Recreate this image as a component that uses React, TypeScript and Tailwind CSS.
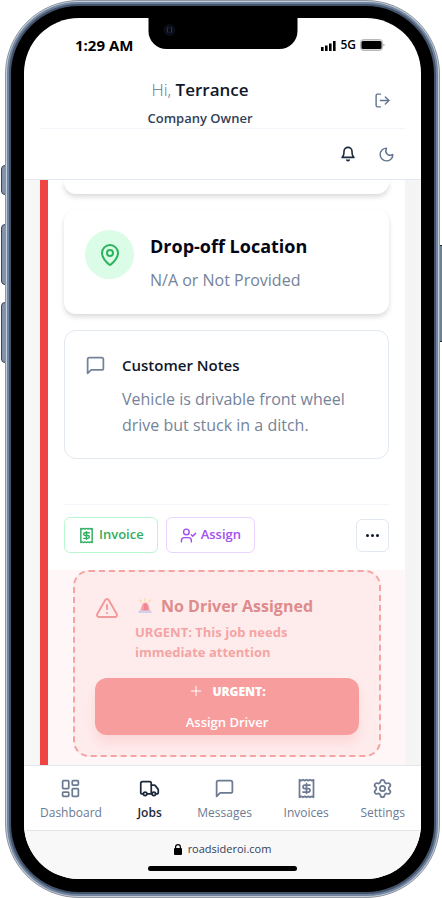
import type { ReactNode } from "react";
import {
  LayoutDashboard,
  LogOut,
  MapPin,
  Moon,
  Plus,
  Receipt,
  Settings,
  TriangleAlert,
  Truck,
  UserCheck,
} from "lucide-react";

function BellIcon() {
  return (
    <svg className="size-4" viewBox="0 0 24 24" fill="none" stroke="currentColor" strokeWidth="2.4" strokeLinecap="round" strokeLinejoin="round" aria-hidden="true">
      <path d="M6 8a6 6 0 0 1 12 0c0 7 3 9 3 9H3s3-2 3-9" />
      <path d="M10.3 21a1.94 1.94 0 0 0 3.4 0" />
    </svg>
  );
}

function MessageIcon() {
  return (
    <svg className="size-[21px] shrink-0" viewBox="0 0 24 24" fill="none" stroke="currentColor" strokeWidth="2" strokeLinecap="round" strokeLinejoin="round" aria-hidden="true">
      <path d="M21 15a2 2 0 0 1-2 2H7l-4 4V5a2 2 0 0 1 2-2h14a2 2 0 0 1 2 2z" />
    </svg>
  );
}

function SirenIcon() {
  return (
    <svg className="size-4 shrink-0" viewBox="0 0 32 32" aria-hidden="true">
      <g stroke="#fbd9a0" strokeWidth="2.4" strokeLinecap="round">
        <path d="M16 1v5M5 4l4 4M27 4l-4 4" />
      </g>
      <path d="M6 27 10 14c2-7 11-7 13 0l3 13z" fill="#f7a0a6" />
      <path d="M13 25 14 14c.4-3 4-4 6-2l2 13z" fill="#f08491" />
      <path d="M4 25h24l2 5H2z" fill="#d6cfec" />
    </svg>
  );
}

function StatusBar() {
  return (
    <div className="flex h-[54px] shrink-0 items-center justify-between pr-9 pl-[51px]">
      <span className="text-[15px] font-bold text-black">1:29 AM</span>
      <div className="flex items-center gap-1 text-black">
        <svg className="h-[11px] w-[15px]" viewBox="0 0 15 11" aria-hidden="true">
          <path d="M0 7h2.6v4H0zM4 5.500h2.600V11H4zM8 3.500h2.600V11H8zM12 1h2.600v10H12z" />
        </svg>
        <span className="text-xs font-semibold">5G</span>
        <svg className="h-3 w-[25px]" viewBox="0 0 25 12" aria-hidden="true">
          <rect x="0.500" y="0.500" width="22" height="11" rx="3" fill="#d8d8d8" stroke="#b8b8b8" />
          <rect x="1.500" y="2" width="20" height="8" rx="1.500" />
          <path d="M23.500 4.500q2 1.500 0 3z" fill="#888" />
        </svg>
      </div>
    </div>
  );
}

function Header() {
  return (
    <header className="shrink-0 border-b border-[#e2e8f0] px-4">
      <div className="flex items-center border-b border-slate-100">
        <div className="flex-1 pt-1 text-center">
          <h1 className="text-[17px] leading-7 font-semibold text-[#0f172a]">
            <span className="font-light text-slate-500">Hi,</span> Terrance
          </h1>
          <p className="pt-1 text-[13px] leading-5 font-semibold text-slate-700">Company Owner</p>
        </div>
        <button type="button" aria-label="Log out" className="flex w-[45px] justify-center text-slate-500">
          <LogOut className="size-[17px]" />
        </button>
      </div>
      <div className="flex h-[50px] items-center justify-end gap-[22px] pr-2.5">
        <button type="button" aria-label="Notifications" className="text-slate-800">
          <BellIcon />
        </button>
        <button type="button" aria-label="Dark mode" className="text-slate-500">
          <Moon className="size-[17px]" />
        </button>
      </div>
    </header>
  );
}

function JobDetails() {
  return (
    <div className="px-4">
      <div className="h-3.5 rounded-b-xl bg-white shadow-[0_3px_5px_rgba(0,0,0,0.14)]" />
      <section className="mt-4 flex gap-4 rounded-xl bg-white px-[21px] py-5 shadow-[0_3px_5px_rgba(0,0,0,0.14)]">
        <div className="flex size-[49px] shrink-0 items-center justify-center rounded-full bg-green-100 text-[#2bb45d]">
          <MapPin className="size-6" />
        </div>
        <div>
          <h2 className="text-lg leading-8 font-bold text-[#020617]">Drop-off Location</h2>
          <p className="pt-1 text-base leading-7 text-[#75839a]">N/A or Not Provided</p>
        </div>
      </section>
      <section className="mt-4 flex gap-4 rounded-xl border border-slate-200 px-5 pt-[21px] pb-5">
        <div className="pt-[3px] text-[#75839a]">
          <MessageIcon />
        </div>
        <div>
          <h2 className="text-[15px] leading-[26px] font-semibold text-[#0f172a]">Customer Notes</h2>
          <p className="pt-2 text-base leading-[26px] text-[#75839a]">Vehicle is drivable front wheel drive but stuck in a ditch.</p>
        </div>
      </section>
      <div className="mt-[45px] flex items-center gap-2 border-t border-slate-100 pt-3 pb-[17px]">
        <button type="button" className="flex h-9 items-center gap-1 rounded-md border border-green-200 px-[13px] text-[13px] font-semibold text-[#31ad60]">
          <Receipt className="size-[17px]" />
          Invoice
        </button>
        <button type="button" className="flex h-9 items-center gap-1 rounded-md border border-purple-200 px-[13px] text-[13px] font-semibold text-[#a34fee]">
          <UserCheck className="size-[17px]" />
          Assign
        </button>
        <button type="button" aria-label="More actions" className="ml-auto flex size-[33px] items-center justify-center gap-0.5 rounded-md border border-slate-200">
          <span className="size-[3px] rounded-full bg-slate-900" />
          <span className="size-[3px] rounded-full bg-slate-900" />
          <span className="size-[3px] rounded-full bg-slate-900" />
        </button>
      </div>
    </div>
  );
}

function UrgentPanel() {
  return (
    <div className="bg-[#fff7f7] pr-6 pb-2 pl-[25px]">
      <section className="rounded-2xl border-2 border-dashed border-[#f5a3a3] bg-[#feecec] p-5">
        <div className="flex gap-4">
          <TriangleAlert className="mt-1 size-6 shrink-0 text-[#f29a9a]" />
          <div>
            <h2 className="flex items-center gap-2 pl-0.5 text-base leading-7 font-bold text-[#dd8b8b]">
              <SirenIcon />
              No Driver Assigned
            </h2>
            <p className="pt-0.5 text-[13px] leading-5 font-bold text-[#f4a4a4]">
              URGENT: This job needs
              <br />
              immediate attention
            </p>
          </div>
        </div>
        <button type="button" className="mt-4 flex h-[57px] w-full flex-col items-center justify-center rounded-xl bg-[#f89d9d] text-[13px] leading-[31px] font-semibold text-white shadow-[0_8px_12px_rgba(248,157,157,0.25)]">
          <span className="flex items-center gap-2 text-xs leading-[31px] font-extrabold">
            <Plus className="size-4" strokeWidth={1.5} />
            URGENT:
          </span>
          <span>Assign Driver</span>
        </button>
      </section>
    </div>
  );
}

function NavItem({ icon, label, active = false }: { icon: ReactNode; label: string; active?: boolean }) {
  return (
    <a
      href="#"
      aria-current={active ? "page" : undefined}
      className={
        active
          ? "flex min-w-8 flex-col items-center gap-1 text-xs leading-5 font-semibold text-slate-800"
          : "flex min-w-8 flex-col items-center gap-1 text-xs leading-5 text-[#6c7a92]"
      }
    >
      {icon}
      {label}
    </a>
  );
}

function BottomNav() {
  return (
    <nav className="flex h-[65px] shrink-0 justify-between border-t border-slate-200 bg-white px-4 pt-3">
      <NavItem icon={<LayoutDashboard className="size-[21px]" />} label="Dashboard" />
      <NavItem icon={<Truck className="size-[21px]" />} label="Jobs" active />
      <NavItem icon={<MessageIcon />} label="Messages" />
      <NavItem icon={<Receipt className="size-[21px]" />} label="Invoices" />
      <NavItem icon={<Settings className="size-[21px]" />} label="Settings" />
    </nav>
  );
}

function BrowserBar() {
  return (
    <footer className="flex shrink-0 flex-col items-center border-t border-[#e4e4e6] bg-[#f8f8f8] py-2">
      <div className="flex items-center gap-1.5 text-[11px] leading-5 text-slate-700">
        <svg className="h-[11px] w-2" viewBox="0 0 8 11" fill="#000" aria-hidden="true">
          <path d="M1 4V3a3 3 0 0 1 6 0v1a1 1 0 0 1 1 1v5a1 1 0 0 1-1 1H1a1 1 0 0 1-1-1V5a1 1 0 0 1 1-1zm1.200 0h3.600V3a1.800 1.800 0 0 0-3.600 0z" fillRule="evenodd" />
        </svg>
        roadsideroi.com
      </div>
      <div className="mt-[7px] h-[5px] w-[149px] rounded-full bg-black" />
    </footer>
  );
}

function Notch() {
  return (
    <div className="absolute top-0 left-1/2 h-[31px] w-[149px] -translate-x-1/2 rounded-b-[18px] bg-black">
      <div className="absolute -top-3 left-[42px] h-2 w-[66px] rounded-b-md bg-[#161616]" />
      <div className="absolute top-1.5 left-[15px] flex size-3 items-center justify-center rounded-full bg-[#0b0d14]">
        <div className="size-1.5 rounded-full border-x border-[#33478a] bg-[#0a0c1c]" />
      </div>
    </div>
  );
}

export default function App() {
  return (
    <div className="h-screen bg-white pr-0.5 pl-[5px] font-['Open_Sans','Noto_Sans',sans-serif]">
      <div className="relative h-full">
        <div className="absolute top-[165px] -left-1 h-[30px] w-1.5 rounded-l-sm border border-[#39465a] bg-[#8292aa]" />
        <div className="absolute top-[224px] -left-1 h-[61px] w-1.5 rounded-l-sm border border-[#39465a] bg-[#8292aa]" />
        <div className="absolute top-[302px] -left-1 h-[61px] w-1.5 rounded-l-sm border border-[#39465a] bg-[#8292aa]" />
        <div className="absolute top-[245px] -right-0.5 h-[97px] w-1 border-y border-[#222b38] bg-[#6d7f99]" />
        <div className="relative h-full rounded-[74px] border border-[#8d949e] bg-[#c4cdd9] p-px">
          <div className="h-full rounded-[72px] border-2 border-[#71849f] bg-[#43536a] p-0.5">
            <div className="h-full rounded-[68px] bg-black px-[13px] pt-3 pb-[13px]">
              <div className="relative flex h-full flex-col overflow-hidden rounded-[55px] bg-white">
                <Notch />
                <StatusBar />
                <Header />
                <main className="min-h-0 flex-1 overflow-hidden bg-gradient-to-r from-[#f7f7f7] via-[#ededed] to-[#f5f5f5] px-4">
                  <article className="h-full border-l-8 border-[#ef4444] bg-white">
                    <JobDetails />
                    <UrgentPanel />
                  </article>
                </main>
                <BottomNav />
                <BrowserBar />
              </div>
            </div>
          </div>
        </div>
      </div>
    </div>
  );
}
